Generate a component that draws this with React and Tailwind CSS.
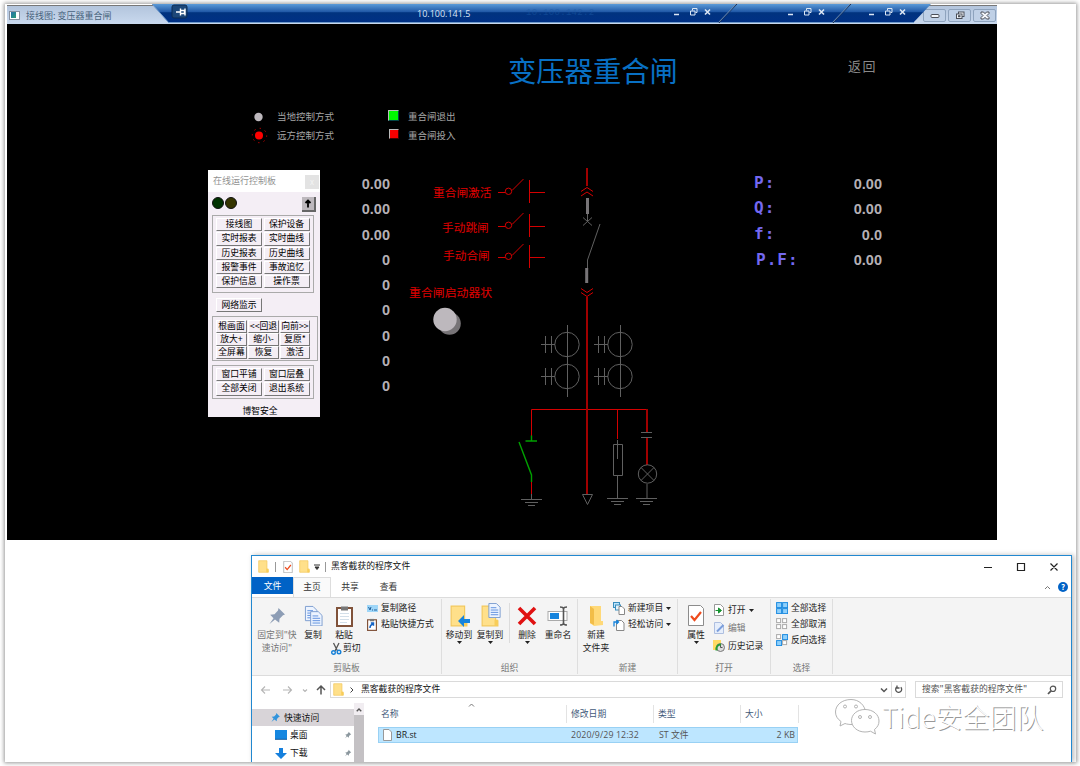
const label = "absolute whitespace-nowrap leading-none";

/* ---------- Remote session bar and SCADA canvas ---------- */

function RemoteBar() {
  return (
    <header className="relative h-[19px] w-[990px] bg-gradient-to-b from-[#b3c5dd] to-[#c9d9ee] border-t border-[#777]">
      <div className="flex h-full items-center">
        <div className="ml-[2px] flex h-[9px] w-[11px] items-center border border-[#8791a0] bg-white">
          <i className="ml-px block h-[6px] w-[5px] bg-gradient-to-br from-[#2a6fa8] to-[#2c9c74]" />
        </div>
        <span className="ml-[6px] whitespace-nowrap text-[9px] leading-none text-[#47627c]">接线图: 变压器重合闸</span>
        <div className="ml-auto mr-[1px] flex gap-[2px]">
          {[0, 1, 2].map((k) => (
            <span key={k} className="flex h-[13px] w-[23px] items-center justify-center rounded-[2px] border border-[#8ea3bd] bg-[#bfd0e6]">
              <svg width="12" height="9" viewBox="0 0 12 9" fill="#f3f6fa" stroke="#4b4f58" strokeWidth="1">
                {k === 0 && <rect x="2" y="3.5" width="8" height="3" rx="1" />}
                {k === 1 && <><rect x="4.5" y="1" width="5.5" height="4.5" /><rect x="2.5" y="3" width="5.5" height="4.5" /><rect x="4.5" y="4.7" width="1.5" height="1" /></>}
                {k === 2 && <path d="M2 1h2.5l1.500 1.700L7.500 1H10v1.500L8 4.500l2 2V8H7.500L6 6.300 4.500 8H2V6.500l2-2-2-2z" />}
              </svg>
            </span>
          ))}
        </div>
      </div>
      <div className="absolute left-[145px] top-[-2px]">
        <svg className="block" width="780" height="20" viewBox="0 0 780 20">
          <defs>
            <linearGradient id="bar" x1="0" y1="0" x2="0" y2="1">
              <stop offset="0" stopColor="#5b9bd8" />
              <stop offset="0.4" stopColor="#225aa8" />
              <stop offset="0.46" stopColor="#01337f" />
              <stop offset="1" stopColor="#003085" />
            </linearGradient>
          </defs>
          <path d="M0 0H779L761 19H17Z" fill="url(#bar)" />
          <path d="M0 0L17 19M16 18.500H762" stroke="#6f9acb" fill="none" />
          <path d="M585 0L567 19M699 0L681 19" stroke="#16315f" strokeWidth="1" />
          <path d="M584 0L566 19M698 0L680 19" stroke="#6d8bb0" strokeWidth="1" />
          <rect x="20" y="1" width="15" height="13" rx="2" fill="#1c4779" stroke="#0d2c55" />
          <path d="M24 8h4M28.500 4.500v7M28.500 6.500h4v3h-4M33 4.500v7" stroke="#fff" strokeWidth="1.400" fill="none" />
          <g stroke="#dce7f5" fill="none">
            {[522, 636, 717].map((x) => (
              <g key={x} transform={`translate(${x} 0)`}>
                <path d="M0 10.500h5" strokeWidth="1.500" />
                <path d="M18.500 6.500V4.500h4.500v4h-1.500M16.500 7h4.500v4h-4.500z" />
                <path d="M31 5.500l5 5M36 5.500l-5 5" strokeWidth="1.600" />
              </g>
            ))}
          </g>
        </svg>
        <span className={`${label} left-[265px] top-[5px] font-['Open_Sans'] text-[9px] text-[#dbe6f5]`}>10.100.141.5</span>
        <span className={`${label} left-[374px] top-[5px] font-['Liberation_Mono'] text-[9px] tracking-[0.3px] text-[#1d5aa5] opacity-50`}>10.100.142.2</span>
      </div>
    </header>
  );
}

function Wiring() {
  const contacts = [192, 226, 257];
  const coils = [[567, 344], [620, 344], [567, 376], [620, 376]];
  return (
    <svg className="absolute left-0 top-0" width="990" height="516" viewBox="7 24 990 516" fill="none">
      <circle cx="258.5" cy="117" r="4.2" fill="#bdb8bd" />
      <circle cx="259" cy="135.5" r="4" fill="#f00" />
      <circle cx="259.5" cy="135.5" r="7.2" stroke="#c00" strokeDasharray="1.3 4.35" />
      <circle cx="449.500" cy="323.500" r="11.3" fill="#777477" />
      <circle cx="445" cy="319.500" r="11.7" fill="#bdb8bd" />
      <g stroke="#d40000">
        {contacts.map((y) => (
          <path key={y} d={`M498 ${y + 0.5}h7M512 ${y - 1.5}l11.5-11.5M529.5 ${y - 12}v23M529.5 ${y + 0.5}h15.5`} />
        ))}
        {contacts.map((y) => <circle key={y} cx="508.5" cy={y - 0.7} r="3.2" />)}
        <path d="M581 191.500l6-4 6 4M581 196l6-4 6 4M581 288.500l6 4 6-4M581 292.500l6 4 6-4" />
        <path d="M531.500 436v-26.500h115.500M617.500 409.500v29.500M531.500 482v14" />
      </g>
      <g stroke="#a00000" strokeWidth="2">
        <path d="M587 168v18M587 297v197M647 409v23M647 438v27" />
      </g>
      <path d="M587.500 198v16M586.700 268v15" stroke="#777477" strokeWidth="3" />
      <g stroke="#606060">
        <path d="M587.500 214v8M583 217.500l9 8M592 217.500l-9 8M600 224l-12.500 36v8" />
        {coils.map(([x, y]) => (
          <g key={`${x}-${y}`}>
            <circle cx={x} cy={y + 0.5} r="12.2" />
            <path d={`M${x - 26} ${y + 0.5}h14M${x - 21.5} ${y - 8}v17M${x - 15.5} ${y - 8}v17`} />
          </g>
        ))}
        <path d="M567.500 325v72M620.500 325v72" />
        <path d="M521 499.500h21M525 502.500h13M528 505.500h7M531.500 494v5" />
        <path d="M582.500 494.500h10l-5 10z" />
        <path d="M613.500 444.500h9v31h-9zM617.500 440v19M617.500 476v22M607 498.500h21M611 501.500h13M614 504.500h7" />
        <path d="M641 432.500h11M641 437.500h11M647 484v14M636 498.500h21M640 501.500h13M643 504.500h7" />
        <circle cx="647.5" cy="474" r="9.2" />
        <path d="M641 467.500l13 13M654 467.500l-13 13" />
      </g>
      <g stroke="#00a000" strokeWidth="1.4">
        <path d="M531.500 435.500v5.500M525.500 441h11.500M519 442l12.500 33v7" />
      </g>
    </svg>
  );
}

function Key({ children, className = "" }) {
  return (
    <button className={`flex items-center justify-center overflow-hidden whitespace-nowrap border-b-[1.500px] border-r-[1.500px] border-t border-l border-t-white border-l-white border-b-[#777] border-r-[#777] bg-[#f4eef5] text-[8.800px] leading-none text-black ${className}`}>
      {children}
    </button>
  );
}

function ControlPanel() {
  const main = ["接线图", "保护设备", "实时报表", "实时曲线", "历史报表", "历史曲线", "报警事件", "事故追忆", "保护信息", "操作票"];
  const view = ["根画面", "<<回退", "向前>>", "放大+", "缩小-", "复原*", "全屏幕", "恢复", "激活"];
  const windows = ["窗口平铺", "窗口层叠", "全部关闭", "退出系统"];
  return (
    <aside className="absolute left-[201px] top-[146px] flex h-[247px] w-[112px] flex-col bg-[#f4eef5]">
      <div className="flex h-[22px] items-center bg-white">
        <span className="ml-[5px] mt-[-1px] whitespace-nowrap text-[9px] leading-none text-[#929292]">在线运行控制板</span>
        <span className="ml-auto mr-px mt-px flex h-[14px] w-[14px] items-center justify-center bg-[#e3e3e3] text-[8px] text-[#f4f4f4]">x</span>
      </div>
      <div className="flex h-[23px] items-center pl-[4px]">
        <i className="mt-[-2px] h-[12px] w-[12px] rounded-full border border-[#111] bg-[#003200]" />
        <i className="ml-px mt-[-2px] h-[12px] w-[12px] rounded-full border border-[#111] bg-[#353500]" />
        <span className="ml-auto mr-[4px] mt-px flex h-[15px] w-[14px] items-center justify-center border-b-2 border-r-2 border-[#666] bg-[#bdb8bd]">
          <svg width="8" height="9" viewBox="0 0 8 9"><path d="M4 1.500v7M1.500 4L4 1.500 6.500 4" stroke="#000" strokeWidth="1.800" fill="none" /></svg>
        </span>
      </div>
      <div className="ml-[4px] grid h-[78px] w-[102px] shrink-0 grid-cols-[46px_46px] grid-rows-[repeat(5,13.250px)] gap-x-[1.500px] gap-y-px border border-[#aaa] pl-[3px] pt-[2px]">
        {main.map((t) => <Key key={t}>{t}</Key>)}
      </div>
      <Key className="ml-[8px] mt-[5px] h-[14px] w-[46px] shrink-0">网络监示</Key>
      <div className="ml-[4px] mt-[4px] grid h-[45px] w-[106px] shrink-0 grid-cols-[31px_31px_30px] grid-rows-[repeat(3,12.500px)] gap-x-px gap-y-[0.500px] border border-[#aaa] pl-[3px] pt-[3px]">
        {view.map((t) => <Key key={t}>{t}</Key>)}
      </div>
      <div className="ml-[4px] mt-[4px] grid h-[34px] w-[102px] shrink-0 grid-cols-[46px_46px] grid-rows-[repeat(2,13.250px)] gap-x-[1.500px] gap-y-px border border-[#aaa] pl-[3px] pt-[2px]">
        {windows.map((t) => <Key key={t}>{t}</Key>)}
      </div>
      <p className="mt-[8px] whitespace-nowrap pr-[8px] text-center text-[8.800px] leading-none text-black">博智安全</p>
    </aside>
  );
}

function Scada() {
  const readings = ["0.00", "0.00", "0.00", "0", "0", "0", "0", "0", "0"];
  const power = [["P:", "0.00"], ["Q:", "0.00"], ["f:", "0.0"], ["P.F:", "0.00"]];
  return (
    <section className="absolute left-[7px] top-[5px] w-[990px]">
      <RemoteBar />
      <div className="relative h-[516px] bg-black">
        <Wiring />
        <h1 className={`${label} left-[501px] top-[32px] text-[28.300px] font-normal text-[#0870c4]`}>变压器重合闸</h1>
        <span className={`${label} left-[841px] top-[35px] text-[13px] tracking-[1.500px] text-[#8a8a8a]`}>返回</span>
        <span className={`${label} left-[270px] top-[88px] text-[9.500px] text-[#a5a5a5]`}>当地控制方式</span>
        <span className={`${label} left-[270px] top-[107px] text-[9.500px] text-[#a5a5a5]`}>远方控制方式</span>
        <i className="absolute left-[381px] top-[86px] h-[11px] w-[11px] border border-[#bbb] border-b-[#044] border-r-[#044] bg-[#00f800]" />
        <i className="absolute left-[382px] top-[105px] h-[10px] w-[10px] border border-[#bbb] border-b-[#400] border-r-[#400] bg-[#f80000]" />
        <span className={`${label} left-[401px] top-[88px] text-[9.500px] text-[#a5a5a5]`}>重合闸退出</span>
        <span className={`${label} left-[401px] top-[107px] text-[9.500px] text-[#a5a5a5]`}>重合闸投入</span>
        <ul className="absolute left-[333px] top-[148px] w-[50px] text-right font-['Liberation_Sans'] text-[14.500px] font-bold leading-[25.250px] text-[#b5b0b5]">
          {readings.map((r, k) => <li key={k}>{r}</li>)}
        </ul>
        <span className={`${label} left-[426px] top-[162px] text-[11.700px] text-[#e00000]`}>重合闸激活</span>
        <span className={`${label} left-[435px] top-[197px] text-[11.700px] text-[#e00000]`}>手动跳闸</span>
        <span className={`${label} left-[436px] top-[225px] text-[11.700px] text-[#e00000]`}>手动合闸</span>
        <span className={`${label} left-[402px] top-[262px] text-[11.900px] text-[#e00000]`}>重合闸启动器状</span>
        <dl className="absolute left-[747px] top-[146px] w-[128px]">
          {power.map(([k, v]) => (
            <div key={k} className="flex h-[25.600px] items-center justify-between">
              <dt className={`font-['DejaVu_Sans_Mono'] text-[16px] font-bold leading-none tracking-[1px] text-[#7468f0] ${k === "P.F:" ? "pl-[2px]" : ""}`}>{k}</dt>
              <dd className="pt-[2px] font-['Liberation_Sans'] text-[14.500px] font-bold leading-none text-[#b5b0b5]">{v}</dd>
            </div>
          ))}
        </dl>
        <ControlPanel />
      </div>
    </section>
  );
}

/* ---------- File explorer ---------- */

function Folder({ w = 11, h = 13 }) {
  return (
    <svg className="shrink-0" width={w} height={h} viewBox="0 0 16 18" preserveAspectRatio="none">
      <path d="M1 1h12v12h2v4H1z" fill="#ffe08a" />
      <path d="M1 1h12v12h2v4H1z" fill="none" stroke="#f2c75a" />
      <path d="M12 12h3v5h-3z" fill="#f8cd58" />
    </svg>
  );
}

function Check({ w, h }) {
  return (
    <svg className="shrink-0" width={w} height={h} viewBox="0 0 16 21">
      <path d="M.5.500h12l3 3v17H.5z" fill="#fff" stroke="#8c8c8c" />
      <path d="M3 11l3.500 4L13 7" fill="none" stroke="#ee4b1d" strokeWidth="2.200" />
    </svg>
  );
}

function Pin({ s = 20, c = "#8d9db5" }) {
  return (
    <svg className="shrink-0" width={s} height={s} viewBox="0 0 20 20" fill={c}>
      <path d="M11.500 2l6.500 6.500-2 .7-3.500 3.500-.3 4L8 13.500 2.500 18l4-5.800L3.200 8.700l4.300-.5L11 4.500z" />
    </svg>
  );
}

function Doc() {
  return (
    <>
      <path d="M.5.500h8l4 4v11h-12z" fill="#edf4ff" stroke="#7b9ccf" />
      <path d="M2.500 5h6M2.500 7.500h8M2.500 10h8M2.500 12.500h8" stroke="#5c8ede" />
    </>
  );
}

function Copy({ size = 19 }) {
  return (
    <svg width={size} height={size * 1.15} viewBox="0 0 20 23">
      <g transform="translate(1 1)"><Doc /></g>
      <g transform="translate(6.500 6.500)"><Doc /></g>
    </svg>
  );
}

function Clipboard({ w = 17, h = 22, link = false }) {
  return (
    <svg className="shrink-0" width={w} height={h} viewBox="0 0 17 22">
      <rect x="1" y="3" width="15" height="18" fill="#fff" stroke="#80523a" strokeWidth="2" />
      <path d="M5 1.500h7v4H5z" fill="#777" />
      {link ? <path d="M5 17c0-4 1-6 5-7M6.500 8.500H11V13" stroke="#1463c4" strokeWidth="2.500" fill="none" /> : <path d="M4 8.500h9M4 11.500h9M4 14.500h9M4 17.500h7" stroke="#d3dfe9" />}
    </svg>
  );
}

function Caret() {
  return <svg className="shrink-0" width="5" height="3" viewBox="0 0 5 3"><path d="M0 0h5L2.500 3z" fill="#222" /></svg>;
}

function Big({ icon, text, className = "", caret = false, muted = false }) {
  return (
    <div className={`flex flex-col items-center whitespace-pre text-center text-[8.800px] leading-[12.500px] ${muted ? "text-[#777]" : "text-[#222]"} ${className}`}>
      <div className="flex h-[25px] items-center justify-center">{icon}</div>
      <span className="mt-px">{text}</span>
      {caret && <span className="mt-[-1px] flex"><Caret /></span>}
    </div>
  );
}

function Small({ icon, text, caret = false, muted = false }) {
  return (
    <div className={`flex h-[16px] items-center gap-[3px] whitespace-nowrap text-[8.800px] leading-none ${muted ? "text-[#777]" : "text-[#222]"}`}>
      <span className="flex w-[12px] justify-center">{icon}</span>
      <span>{text}</span>
      {caret && <Caret />}
    </div>
  );
}

function Group({ name, className, children }) {
  return (
    <div className={`flex h-[75px] shrink-0 flex-col border-r border-[#dedede] pt-[4px] ${className}`}>
      <div className="flex h-[60px]">{children}</div>
      <p className="text-center text-[8.800px] leading-[9px] text-[#777]">{name}</p>
    </div>
  );
}

function SelectIcon({ kind }) {
  const on = kind === "all" ? [1, 1, 1, 1] : kind === "none" ? [0, 0, 0, 0] : [0, 1, 1, 0];
  return (
    <svg className="shrink-0" width="12" height="12" viewBox="0 0 12 12">
      {on.map((f, k) => (
        <rect key={k} x={(k % 2) * 6 + 0.6} y={Math.floor(k / 2) * 6 + 0.6} width={f ? 5 : 4} height={f ? 5 : 4} fill={f ? "#8fd0fb" : "#fff"} stroke={f ? "#1b8ae0" : "#aaa"} />
      ))}
    </svg>
  );
}

function Ribbon() {
  return (
    <div className="flex h-[79px] shrink-0 border-y border-[#dcdcdc] bg-[#f4f4f4] pt-[1px]">
      <Group name="剪贴板" className="w-[190px]">
        <Big className="ml-[4px] w-[42px]" muted icon={<Pin />} text={"固定到\"快\n速访问\""} />
        <Big className="ml-[1px] w-[28px]" icon={<Copy />} text="复制" />
        <div className="w-[36px]">
          <Big className="w-[34px]" icon={<Clipboard />} text="粘贴" />
          <div className="ml-[4px] flex items-center whitespace-nowrap text-[8.800px] leading-none text-[#222]">
            <svg width="11" height="13" viewBox="0 0 11 13" fill="none"><path d="M2.500 1l4 8M8 1L4 9" stroke="#555" strokeWidth="1.300" /><circle cx="2.500" cy="10.500" r="1.800" stroke="#1681d8" strokeWidth="1.400" /><circle cx="8" cy="10" r="1.800" stroke="#1681d8" strokeWidth="1.400" /></svg>
            <span className="ml-[1px]">剪切</span>
          </div>
        </div>
        <div className="ml-[3px] mt-[-3px]">
          <Small icon={<svg width="11" height="7" viewBox="0 0 11 7"><rect width="11" height="7" fill="#9ed6f8" /><path d="M1.500 2l1.500 3 1-3M5 5h1M7 5h3" stroke="#20609c" fill="none" /></svg>} text="复制路径" />
          <Small icon={<Clipboard w={10} h={13} link />} text="粘贴快捷方式" />
        </div>
      </Group>
      <Group name="组织" className="w-[136px]">
        <Big className="ml-[2px] w-[30px]" caret text="移动到" icon={<span className="relative"><Folder w={18} h={22} /><svg className="absolute bottom-0 left-[8px]" width="13" height="12" viewBox="0 0 13 12"><path d="M0 6l6-6v4h6v4H6v4z" fill="#1684dd" /></svg></span>} />
        <Big className="ml-[1px] w-[30px]" caret text="复制到" icon={<span className="relative"><Folder w={18} h={22} /><svg className="absolute left-[7px] top-[-2px]" width="13" height="15" viewBox="0 0 13 16"><Doc /></svg></span>} />
        <i className="ml-[4px] block h-[40px] w-px bg-[#dcdcdc]" />
        <Big className="ml-[3px] w-[28px]" caret text="删除" icon={<svg width="20" height="20" viewBox="0 0 20 20"><path d="M2 2l16 16M18 2L2 18" stroke="#e01111" strokeWidth="3.600" /></svg>} />
        <Big className="ml-[3px] w-[28px]" text="重命名" icon={<svg width="22" height="20" viewBox="0 0 22 20"><rect x="1" y="5.500" width="19" height="9" fill="#fff" stroke="#aaa" /><rect x="3" y="7" width="9" height="6" fill="#1684dd" /><path d="M13 1q3 0 3.500 1.500Q17 1 20 1M16.500 2v16M13 19q3 0 3.500-1.500Q17 19 20 19" fill="none" stroke="#555" strokeWidth="1.600" /></svg>} />
      </Group>
      <Group name="新建" className="w-[100px]">
        <Big className="ml-[3px] w-[30px]" text={"新建\n文件夹"} icon={<svg width="15" height="20" viewBox="0 0 15 20"><path d="M1 0h11v15h2v4l-9 1-4-3z" fill="#ffd978" /><path d="M1 0l4 3v16l-4-2z" fill="#f2bd48" /></svg>} />
        <div className="ml-[2px] mt-[-3px]">
          <Small caret text="新建项目" icon={<svg width="12" height="13" viewBox="0 0 12 13"><rect x=".5" y=".5" width="6" height="5" fill="#bde4fb" stroke="#3a8dbd" /><rect x="2.500" y="3" width="5" height="5" fill="#e6f3fa" stroke="#3a8dbd" /><path d="M6 4.500h3l2.500 2.500v5.500H6z" fill="#fff" stroke="#888" /></svg>} />
          <Small caret text="轻松访问" icon={<svg width="12" height="13" viewBox="0 0 12 13"><path d="M3.500 2.500h5L11 5v7.500H3.500z" fill="#fff" stroke="#888" /><path d="M1 8.500V4h4M3.500 2L5.500 4l-2 2" stroke="#1684dd" strokeWidth="1.300" fill="none" /></svg>} />
        </div>
      </Group>
      <Group name="打开" className="w-[93px]">
        <Big className="ml-[4px] w-[28px]" caret text="属性" icon={<Check w={16} h={21} />} />
        <div className="ml-[3px] mt-[-1px] flex flex-col gap-[2px]">
          <Small caret text="打开" icon={<svg width="10" height="12" viewBox="0 0 10 12"><path d="M.5.500h6l3 3v8h-9z" fill="#fff" stroke="#999" /><path d="M1.500 6.500h4M4.500 4l3 2.500-3 2.500z" fill="#16932f" stroke="#16932f" /></svg>} />
          <Small muted text="编辑" icon={<svg width="11" height="12" viewBox="0 0 11 12"><path d="M.5.500h6l3 3v8h-9z" fill="#e6eefb" stroke="#aebfe0" /><path d="M3 9.500L9.500 3" stroke="#7c9edb" strokeWidth="2" /></svg>} />
          <Small text="历史记录" icon={<svg width="12" height="12" viewBox="0 0 12 12"><path d="M0 0h8v10H0z" fill="#ffda63" /><circle cx="7.500" cy="7.500" r="4" fill="#ddd" stroke="#777" /><path d="M7.500 5v2.500h2" stroke="#555" fill="none" /><path d="M3.500 10.500C3 6 5 4.500 8 4.500" stroke="#279b36" strokeWidth="2" fill="none" /></svg>} />
        </div>
      </Group>
      <Group name="选择" className="w-[62px]">
        <div className="ml-[5px] mt-[-3px]">
          <Small icon={<SelectIcon kind="all" />} text="全部选择" />
          <Small icon={<SelectIcon kind="none" />} text="全部取消" />
          <Small icon={<SelectIcon kind="invert" />} text="反向选择" />
        </div>
      </Group>
    </div>
  );
}

function AddressRow() {
  return (
    <div className="flex h-[27px] shrink-0 items-center pl-[8px] pr-[8px]">
      <svg width="70" height="12" viewBox="0 0 70 12" fill="none" strokeWidth="1.100">
        <path d="M10 6H1.500M5 2.500L1.500 6 5 9.500M23 6h8.500M28 2.500L31.500 6 28 9.500M43 5.500l2 2 2-2" stroke="#b5b5b5" />
        <path d="M61 10.500V2M57 6l4-4 4 4" stroke="#555" strokeWidth="1.500" />
      </svg>
      <div className="flex h-[17px] w-[562px] items-center border border-[#dadada] pl-[2px]">
        <Folder />
        <svg className="ml-[6px]" width="4" height="6" viewBox="0 0 4 6"><path d="M.5.500L3 3 .5 5.500" fill="none" stroke="#444" /></svg>
        <span className="ml-[7px] whitespace-nowrap text-[8.800px] leading-none text-[#111]">黑客截获的程序文件</span>
        <svg className="ml-auto mr-[3px]" width="8" height="6" viewBox="0 0 8 6"><path d="M1 1.500l3 3 3-3" fill="none" stroke="#555" strokeWidth="1.500" /></svg>
      </div>
      <div className="flex h-[17px] w-[14px] items-center justify-center border border-l-0 border-[#dadada]">
        <svg width="9" height="9" viewBox="0 0 9 9" fill="none" stroke="#555" strokeWidth="1.300"><path d="M6.800 2.200A3 3 0 1 1 3 1.800M3 .5v2.500h2.500" /></svg>
      </div>
      <div className="ml-auto flex h-[17px] w-[148px] items-center justify-between border border-[#dadada] pl-[6px] pr-[5px]">
        <span className="whitespace-nowrap text-[8.800px] leading-none text-[#555]">搜索"黑客截获的程序文件"</span>
        <svg width="10" height="10" viewBox="0 0 10 10" fill="none" stroke="#555" strokeWidth="1.200"><circle cx="6" cy="3.800" r="2.700" /><path d="M4 5.800L1 9" strokeWidth="1.700" /></svg>
      </div>
    </div>
  );
}

function Nav() {
  return (
    <nav className="flex w-[112px] shrink-0 text-[8.800px] text-[#111]">
      <div className="w-[102px] pt-[6px]">
        <div className="flex h-[17px] items-center bg-[#d8d4d8] pl-[18px]">
          <Pin s={11} c="#3194dc" /><span className="ml-[3px]">快速访问</span>
        </div>
        <div className="flex h-[18px] items-center pl-[23px] pr-[2px]">
          <svg width="12" height="10" viewBox="0 0 12 10"><rect width="12" height="9" fill="#1687e0" /><path d="M0 9.300h12" stroke="#0f589c" /></svg>
          <span className="ml-[3px]">桌面</span><span className="ml-auto"><Pin s={8} c="#8b979e" /></span>
        </div>
        <div className="flex h-[18px] items-center pl-[23px] pr-[2px]">
          <svg width="12" height="11" viewBox="0 0 12 11"><path d="M4 0h4v5h4l-6 6-6-6h4z" fill="#1680dd" /></svg>
          <span className="ml-[3px]">下载</span><span className="ml-auto"><Pin s={8} c="#8b979e" /></span>
        </div>
      </div>
      <div className="w-[10px] bg-[#f1edf1]">
        <svg width="10" height="12" viewBox="0 0 11 12"><path d="M3 8.500l2.500-2.500L8 8.500" fill="none" stroke="#555" strokeWidth="1.500" /></svg>
        <div className="h-[60px] bg-[#c4c1c4]" />
      </div>
    </nav>
  );
}

function Explorer() {
  const cols = "grid grid-cols-[189px_87px_87px_58px] items-center";
  return (
    <section className="absolute left-[251px] top-[555px] flex h-[207px] w-[821px] flex-col overflow-hidden border border-b-0 border-[#2288d0] bg-white shadow-[2px_0_5px_#bbb]">
      <div className="flex h-[21px] shrink-0 items-center pl-[6px] pr-[12px]">
        <Folder />
        <i className="ml-[6px] mr-[7px] block h-[10px] w-px bg-[#999]" />
        <Check w={10} h={12} />
        <span className="ml-[6px]"><Folder /></span>
        <svg className="ml-[4px] mt-px" width="6" height="6" viewBox="0 0 6 6"><path d="M0 1h6M1 3h4L3 5.500z" stroke="#333" fill="#333" /></svg>
        <i className="ml-[5px] mr-[5px] block h-[10px] w-px bg-[#999]" />
        <span className="whitespace-nowrap text-[8.800px] leading-none text-[#111]">黑客截获的程序文件</span>
        <svg className="ml-auto" width="76" height="10" viewBox="0 0 76 10" fill="none" stroke="#222" strokeWidth="1.200"><path d="M1 5.500h8M34.500 1.500h7v7h-7zM67.500 1.500l7 7M74.500 1.500l-7 7" /></svg>
      </div>
      <div className="flex h-[20px] shrink-0 items-stretch text-[8.800px] leading-[20px] text-[#333]">
        <span className="mb-[3px] w-[41px] bg-[#0062c6] text-center leading-[18px] text-white">文件</span>
        <span className="-mb-px w-[38px] border-x border-t border-[#ddd] bg-[#fafafa] text-center leading-[18px]">主页</span>
        <span className="w-[38px] text-center">共享</span>
        <span className="w-[39px] text-center">查看</span>
        <span className="ml-auto mr-[3px] flex items-center gap-[7px]">
          <svg width="7" height="5" viewBox="0 0 7 5"><path d="M1 4l2.500-2.500L6 4" fill="none" stroke="#777" /></svg>
          <b className="flex h-[10px] w-[10px] items-center justify-center rounded-full bg-[#0062c6] text-[8px] leading-none text-white">?</b>
        </span>
      </div>
      <Ribbon />
      <AddressRow />
      <div className="flex min-h-0 flex-1">
        <Nav />
        <main className="ml-[14px] w-[424px]">
          <div className="flex h-[4px] items-end pl-[90px]">
            <svg width="7" height="4" viewBox="0 0 7 4"><path d="M1 3.500L3.500 1 6 3.500" stroke="#777" fill="none" /></svg>
          </div>
          <div className={`${cols} mt-[-2px] h-[18px] text-[8.800px] leading-[18px] text-[#42597a]`}>
            <span className="border-r border-[#e3e3e3] pl-[3px]">名称</span>
            <span className="border-r border-[#e3e3e3] pl-[4px]">修改日期</span>
            <span className="border-r border-[#e3e3e3] pl-[4px]">类型</span>
            <span className="border-r border-[#e3e3e3] pl-[4px]">大小</span>
          </div>
          <div className={`${cols} mt-[4px] h-[16px] w-[420px] border border-[#99d1f4] bg-[#bde6ff] font-['Open_Sans','Noto_Sans_CJK_SC',sans-serif] text-[8.800px] leading-[14px] text-[#555]`}>
            <span className="flex items-center pl-[4px] text-[#222]">
              <svg width="9" height="12" viewBox="0 0 9 12"><path d="M.5.500h5.500l2.500 2.500v8.500h-8z" fill="#fff" stroke="#999" /></svg>
              <span className="ml-[4px]">BR.st</span>
            </span>
            <span className="whitespace-nowrap pl-[3px] tracking-[0.100px]">2020/9/29 12:32</span>
            <span className="pl-[4px]">ST 文件</span>
            <span className="pr-[5px] text-right">2 KB</span>
          </div>
        </main>
      </div>
    </section>
  );
}

function Watermark() {
  return (
    <div className="absolute left-[834px] top-[698px] flex items-center">
      <svg width="46" height="38" viewBox="0 0 46 38" fill="#fff" stroke="#aaa" strokeWidth=".9">
        <path d="M17 1.500C8 1.500 1.500 7 1.500 14c0 4 2 7 5.500 9.500L6 28l5-2.500c2 .7 4 1 7 1l14-11C31 7 25 1.500 17 1.500z" />
        <path d="M31 11.500c-8 0-13.500 5-13.500 11s5.500 11.500 13.500 11.500c2 0 4-.3 5.500-.8l5 2.800-1-4.500c3-2.300 4.500-5 4.500-8.500 0-6.500-6-11.500-14-11.500z" />
        <circle cx="11" cy="8.500" r="1.500" /><circle cx="22" cy="8.500" r="1.500" /><circle cx="26" cy="19" r="1.500" /><circle cx="36" cy="19" r="1.500" />
      </svg>
      <span className="ml-[2px] mt-[-1px] whitespace-nowrap text-[27px] font-light leading-none text-white [text-shadow:1px_1px_0.500px_#999]">Tide安全团队</span>
    </div>
  );
}

export default function App() {
  return (
    <div className="relative h-[766px] w-[1080px] overflow-hidden bg-white font-['Noto_Sans_CJK_SC',sans-serif]">
      <div className="absolute left-[5px] top-[4px] h-[758px] w-[1071px] bg-white shadow-[0_0_4px_1px_#999]" />
      <Scada />
      <Explorer />
      <Watermark />
    </div>
  );
}
